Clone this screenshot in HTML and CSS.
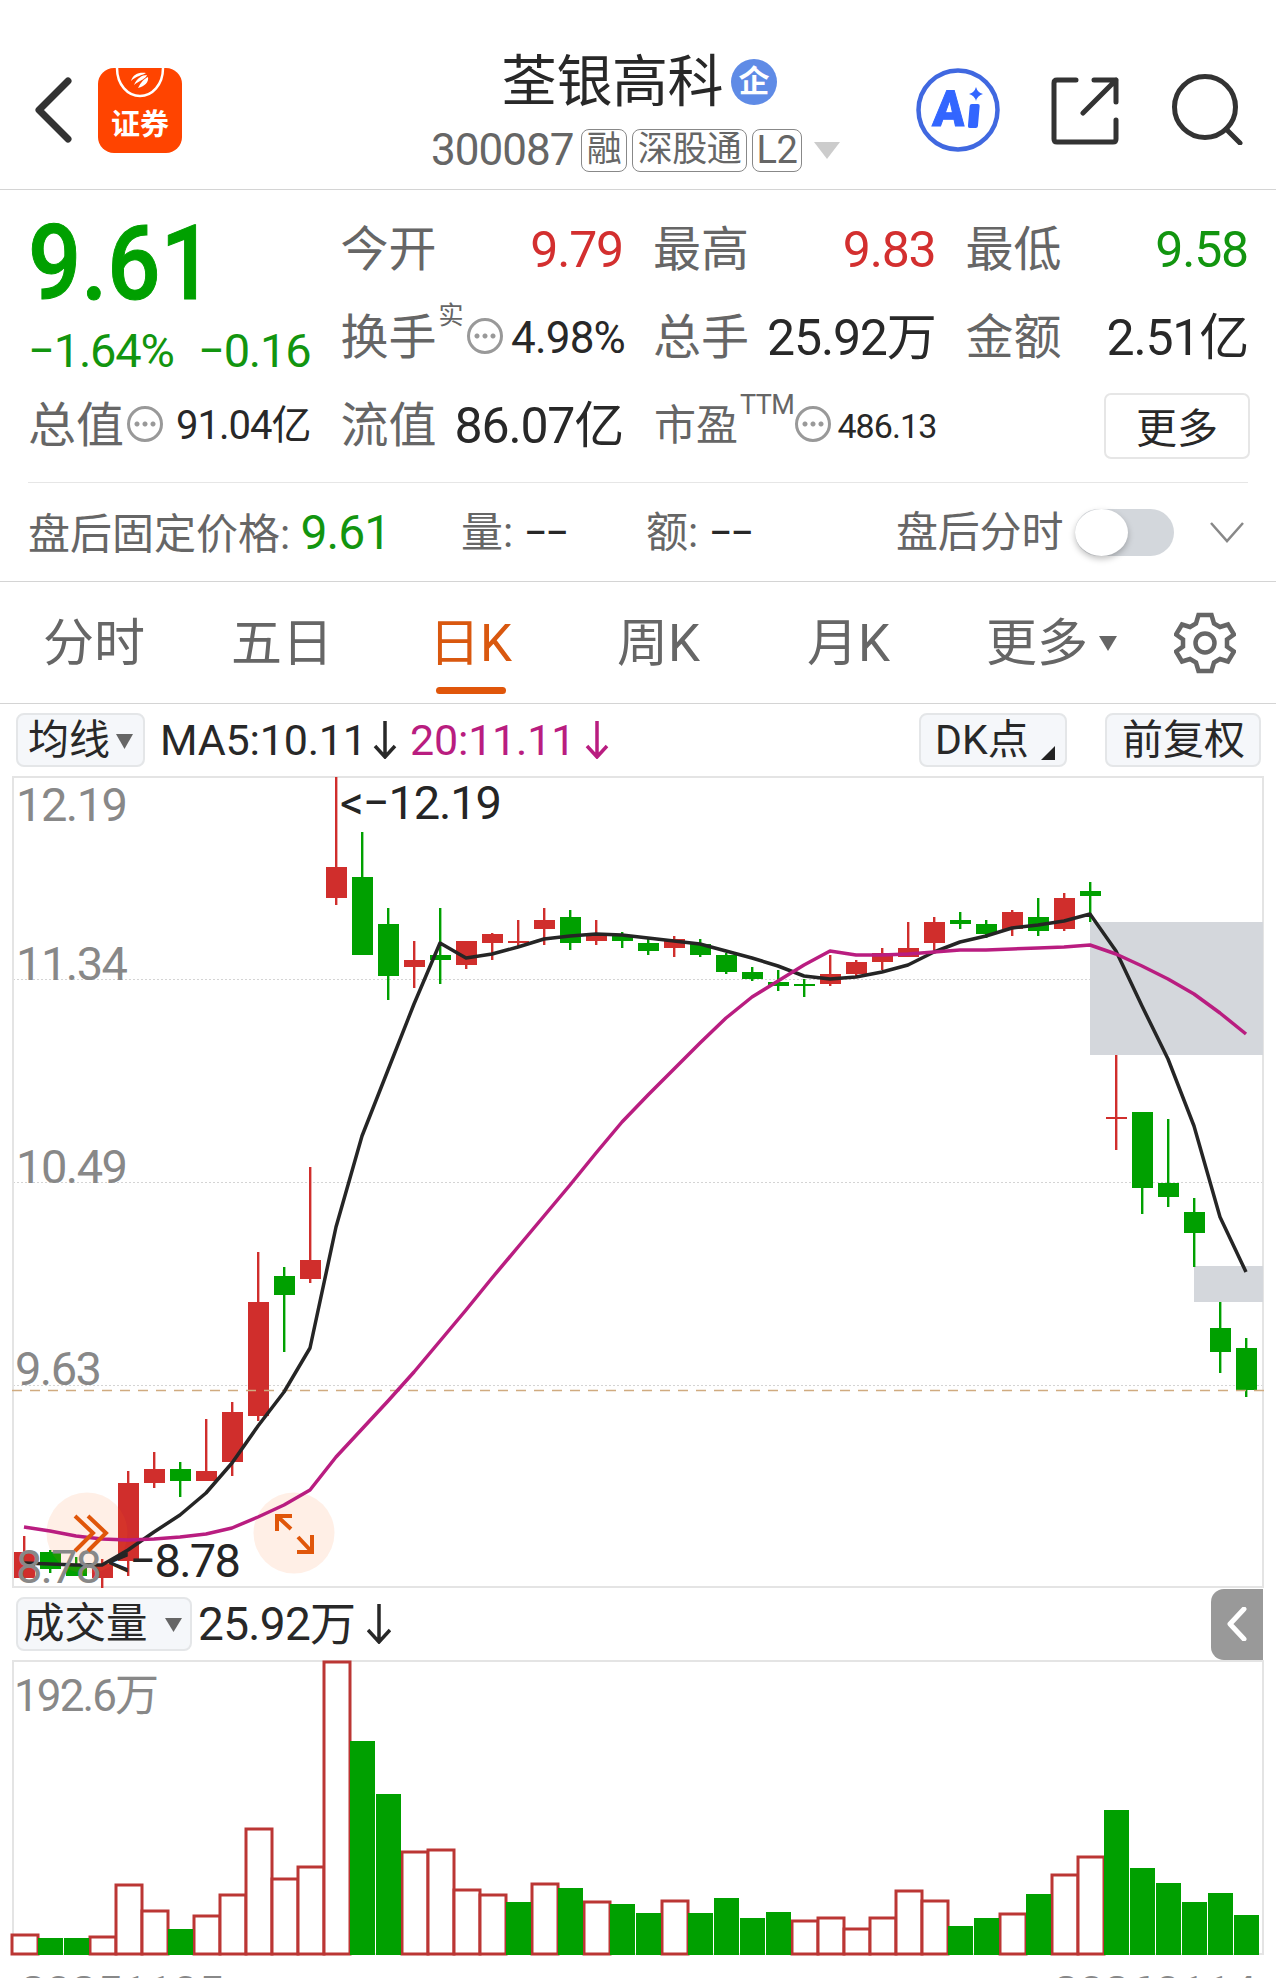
FILE: index.html
```html
<!DOCTYPE html>
<html lang="zh-CN">
<head>
  <meta charset="UTF-8" />
  <meta name="viewport" content="width=device-width, initial-scale=1.0" />
  <title>荃银高科 300087</title>
  <link rel="stylesheet" href="styles.css">
</head>
<body>

  <header class="header">
    <div class="header-left">
      <svg class="back" width="38" height="66" viewBox="0 0 38 66"><path d="M34 4 L5 33 L34 62" /></svg>
      <div class="app-logo">
        <svg width="84" height="30" viewBox="0 0 84 30">
          <path class="logo-ring" d="M19 0 C19 17 30 28 42 28 C54 28 65 17 65 0" />
          <path class="logo-mark" d="M33 13 C35 6 41 4 48 5 C45 7 38 8 33 13 Z M36 17 C39 10 44 7 49 7 C48 11 42 12 36 17 Z M40 20 C43 14 46 11 50 9 C51 14 47 18 40 20 Z" />
        </svg>
        <span>证券</span>
      </div>
    </div>
    <div class="header-title">
      <div class="name-row"><span class="name">荃银高科</span><span class="badge">企</span></div>
      <div class="code-row">
        <span class="code">300087</span>
        <span class="tag tag-1">融</span>
        <span class="tag tag-3">深股通</span>
        <span class="tag tag-2">L2</span>
        <svg class="drop" width="26" height="17" viewBox="0 0 26 17"><path d="M0 0 H26 L13 17 Z" fill="#ccc" /></svg>
      </div>
    </div>
    <div class="header-right">
      <div class="ai">
        <svg width="84" height="84" viewBox="0 0 84 84">
          <circle cx="42" cy="42" r="39.5" />
          <text x="20" y="58" textLength="32" lengthAdjust="spacingAndGlyphs" transform="skewX(-4)">A</text>
          <rect x="53" y="36" width="10" height="24" rx="2" transform="skewX(-5) translate(4 0)" />
          <path d="M60 19 Q61.500 24.500 67 26 Q61.500 27.500 60 33 Q58.500 27.500 53 26 Q58.500 24.500 60 19 Z" />
        </svg>
      </div>
      <svg class="line-icon" width="68" height="68" viewBox="0 0 68 68"><path d="M25 3 H6 Q3 3 3 6 V62 Q3 65 6 65 H62 Q65 65 65 62 V43 M43 3 H65 V25 M65 3 L32 36" /></svg>
      <svg class="line-icon search" width="72" height="72" viewBox="0 0 72 72"><circle cx="34" cy="34" r="30.500" /><path d="M55 56 L69 70" /></svg>
    </div>
  </header>

  <section class="quote">
    <div class="col col-main">
      <div class="price">9.61</div>
      <div class="change"><span>−1.64%</span><span>−0.16</span></div>
      <div class="cell">
        <span class="label">总值</span><i class="more-dot"></i><span class="value v-40">91.04亿</span>
      </div>
    </div>
    <div class="col">
      <div class="cell"><span class="label">今开</span><span class="value up">9.79</span></div>
      <div class="cell"><span class="label">换手</span><sup class="sup-cn">实</sup><i class="more-dot"></i><span class="value v-43">4.98%</span></div>
      <div class="cell"><span class="label">流值</span><span class="value">86.07亿</span></div>
    </div>
    <div class="col">
      <div class="cell"><span class="label">最高</span><span class="value up">9.83</span></div>
      <div class="cell"><span class="label">总手</span><span class="value">25.92万</span></div>
      <div class="cell"><span class="label label-sm">市盈</span><sup class="sup-en">TTM</sup><i class="more-dot dot-near"></i><span class="value v-34">486.13</span></div>
    </div>
    <div class="col">
      <div class="cell"><span class="label">最低</span><span class="value down">9.58</span></div>
      <div class="cell"><span class="label">金额</span><span class="value">2.51亿</span></div>
      <div class="cell"><button class="more-btn">更多</button></div>
    </div>
  </section>

  <section class="after">
    <span class="after-price">盘后固定价格: <b>9.61</b></span>
    <span class="after-vol">量: <em>−−</em></span>
    <span class="after-amt">额: <em>−−</em></span>
    <span class="after-switch">盘后分时</span>
    <span class="toggle"><i></i></span>
    <svg class="expand" width="36" height="22" viewBox="0 0 36 22"><path d="M2 1 L18 19 L34 1" /></svg>
  </section>

  <nav class="tabs">
    <a class="tab">分时</a>
    <a class="tab">五日</a>
    <a class="tab active">日K</a>
    <a class="tab">周K</a>
    <a class="tab">月K</a>
    <a class="tab tab-more">更多<svg width="18" height="15" viewBox="0 0 18 15"><path d="M0 0 H18 L9 15 Z" fill="#666" /></svg></a>
    <svg class="gear" width="62" height="62" viewBox="-31 -31 62 62">
      <path d="M-6.500 -28 H6.500 L9 -19.500 L15 -16 L23 -18.500 L29 -8.500 L22 -3.500 V3.500 L29 8.500 L23 18.500 L15 16 L9 19.500 L6.500 28 H-6.500 L-9 19.500 L-15 16 L-23 18.500 L-29 8.500 L-22 3.500 V-3.500 L-29 -8.500 L-23 -18.500 L-15 -16 L-9 -19.500 Z" />
      <circle r="9.500" />
    </svg>
  </nav>

  <div class="bar bar-ma">
    <span class="chip chip-ma">均线<svg width="17" height="15" viewBox="0 0 17 15"><path d="M0 0 H17 L8.500 15 Z" fill="#666" /></svg></span>
    <span class="ma5">MA5:10.11</span>
    <svg class="arrow" width="24" height="38" viewBox="0 0 24 38"><path d="M12 0 V35 M2 25 L12 36 L22 25" /></svg>
    <span class="ma20">20:11.11</span>
    <svg class="arrow arrow-ma20" width="24" height="38" viewBox="0 0 24 38"><path d="M12 0 V35 M2 25 L12 36 L22 25" /></svg>
    <span class="chip chip-dk">DK点<svg width="14" height="14" viewBox="0 0 14 14"><path d="M14 0 V14 H0 Z" fill="#222" /></svg></span>
    <span class="chip chip-fq">前复权</span>
  </div>

  <svg id="kline" class="kline" width="1276" height="812" viewBox="0 776 1276 812"></svg>

  <div class="bar bar-vol">
    <span class="chip chip-vol">成交量<svg width="17" height="14" viewBox="0 0 17 14"><path d="M0 0 H17 L8.500 14 Z" fill="#666" /></svg></span>
    <span class="vol">25.92万</span>
    <svg class="arrow" width="24" height="40" viewBox="0 0 24 40"><path d="M12 0 V37 M1 26 L12 38 L23 26" /></svg>
    <span class="side-tab"><svg width="20" height="34" viewBox="0 0 20 34"><path d="M17 2 L3 17 L17 32" /></svg></span>
  </div>

  <svg id="volume" class="volume" width="1276" height="318" viewBox="0 1660 1276 318"></svg>

  <script src="chart.js"></script>
</body>
</html>
```

FILE: styles.css
```css
* {
  box-sizing: border-box;
}

body {
  margin: 0;
  width: 1276px;
  height: 1978px;
  overflow: hidden;
  background: #fff;
  color: #282828;
  font-family: Roboto, "Noto Sans CJK SC", sans-serif;
  line-height: 1;
}

svg {
  display: block;
  flex: none;
}

span, a, sup, i, b, em {
  white-space: nowrap;
  font-style: normal;
}

/* header */
.header {
  display: flex;
  height: 190px;
  border-bottom: 1px solid #d4d4d4;
}

.header-left {
  display: flex;
  align-items: flex-start;
  width: 431px;
  padding: 68px 0 0 34px;
}

.back {
  margin-top: 9px;
}

.back path {
  fill: none;
  stroke: #333;
  stroke-width: 7;
  stroke-linecap: round;
  stroke-linejoin: round;
}

.app-logo {
  width: 84px;
  height: 85px;
  margin-left: 26px;
  border-radius: 16px;
  background: #ff4400;
  color: #fff;
  text-align: center;
  overflow: hidden;
}

.app-logo span {
  display: block;
  margin-top: 9px;
  font-family: "Noto Sans CJK SC", sans-serif;
  font-size: 29px;
  line-height: 30px;
  font-weight: 700;
}

.logo-ring {
  fill: none;
  stroke: #fff;
  stroke-width: 2.5;
}

.logo-mark {
  fill: #fff;
}

.header-title {
  width: 420px;
  padding-top: 51px;
}

.name-row {
  display: flex;
  align-items: center;
  height: 62px;
  padding-left: 70px;
}

.name {
  font-size: 56px;
  letter-spacing: -0.5px;
}

.badge {
  width: 46px;
  height: 46px;
  margin-left: 8px;
  border-radius: 50%;
  background: #5f8be6;
  color: #fff;
  font-size: 31px;
  font-weight: 700;
  line-height: 45px;
  text-align: center;
}

.code-row {
  display: flex;
  align-items: center;
  height: 44px;
  margin-top: 15px;
  color: #666;
}

.code {
  width: 150px;
  font-size: 44px;
  letter-spacing: -1px;
}

.tag {
  height: 43px;
  margin-right: 5px;
  border: 1.5px solid #888;
  border-radius: 8px;
  font-size: 35px;
  line-height: 40px;
  letter-spacing: -0.5px;
  text-align: center;
}

.tag-1 { width: 46px; }
.tag-2 { width: 50px; font-size: 38px; }
.tag-3 { width: 115px; }

.drop {
  margin-left: 7px;
}

.header-right {
  display: flex;
  align-items: flex-start;
  padding-top: 68px;
  margin-left: 65px;
}

.ai circle {
  fill: none;
  stroke: #4068e0;
  stroke-width: 4.5;
}

.ai {
  fill: #3366ff;
}

.ai text {
  font-size: 50px;
  font-weight: 900;
  stroke: #3366ff;
  stroke-width: 1;
}

.line-icon {
  margin: 9px 0 0 51px;
  fill: none;
  stroke: #333;
  stroke-width: 5;
  stroke-linecap: round;
  stroke-linejoin: round;
}

.search {
  margin: 5px 0 0 52px;
}

/* quote */
.quote {
  display: flex;
  gap: 30px;
  height: 292px;
  padding: 16px 27px 0 28px;
}

.col {
  width: 282.5px;
  flex: none;
}

.cell {
  display: flex;
  align-items: center;
  height: 88px;
}

.label {
  color: #666;
  font-size: 48px;
}

.label-sm {
  font-size: 42px;
  padding-left: 1px;
}

.value {
  margin-left: auto;
  font-size: 50px;
  letter-spacing: -1.2px;
}

.v-43 { font-size: 44px; letter-spacing: -0.8px; margin-right: -2px; }
.v-40 { font-size: 40px; letter-spacing: -1px; }
.v-34 { font-size: 34px; letter-spacing: -0.9px; margin-right: -1px; }

.up { color: #d32f2f; }
.down { color: #12950f; }

.price {
  height: 112px;
  color: #00a000;
  font-size: 104px;
  font-weight: 500;
  line-height: 116px;
  transform: scaleX(0.9);
  transform-origin: 0 0;
  -webkit-text-stroke: 1px #00a000;
}

.change {
  display: flex;
  justify-content: space-between;
  height: 64px;
  color: #12950f;
  font-size: 47px;
  line-height: 66px;
  letter-spacing: -1.2px;
}

.more-dot {
  flex: none;
  width: 36px;
  height: 36px;
  margin: -4px 0 0 3px;
  border: 3px solid #999;
  border-radius: 50%;
  background:
    radial-gradient(circle at 7px 15px, #999 2px, transparent 3px),
    radial-gradient(circle at 15px 15px, #999 2px, transparent 3px),
    radial-gradient(circle at 23px 15px, #999 2px, transparent 3px);
}

.dot-near {
  margin-left: 1px;
}

.sup-cn {
  margin: -46px 0 0 2px;
  color: #666;
  font-size: 25px;
}

.sup-en {
  margin: -42px 0 0 2px;
  color: #666;
  font-size: 27px;
  letter-spacing: -0.6px;
}

.more-btn {
  width: 146px;
  height: 66px;
  margin: 0 -2px 0 auto;
  padding: 0 0 8px;
  border: 2px solid #e6e6e6;
  border-radius: 7px;
  background: #fff;
  color: #282828;
  font-family: inherit;
  font-size: 41px;
}

/* after-hours row */
.after {
  display: flex;
  align-items: center;
  position: relative;
  height: 100px;
  padding: 2px 0 0 28px;
  border-bottom: 1px solid #d4d4d4;
  color: #666;
  font-size: 42px;
}

/* short rule that stays inside the side padding */
.after::before {
  content: "";
  position: absolute;
  top: 0;
  left: 28px;
  right: 28px;
  height: 1px;
  background: #e6e6e6;
}

.after b {
  color: #12950f;
  font-size: 48px;
  font-weight: 400;
  letter-spacing: -1px;
}

.after em {
  color: #282828;
  letter-spacing: -2.5px;
}

.after-price { width: 433px; }
.after-vol { width: 185px; }
.after-amt { width: 250px; }
.after-switch { width: 179px; letter-spacing: -0.2px; }

.toggle {
  width: 99px;
  height: 47px;
  border-radius: 24px;
  background: #d3d7dc;
}

.toggle i {
  display: block;
  width: 53px;
  height: 47px;
  border-radius: 50%;
  background: #fff;
  box-shadow: 0 3px 6px rgba(0, 0, 0, 0.25);
}

.expand {
  margin-left: 35px;
  fill: none;
  stroke: #888;
  stroke-width: 2.5;
}

/* tabs */
.tabs {
  display: flex;
  height: 122px;
  padding-left: 43px;
  border-bottom: 1px solid #d4d4d4;
}

.tab {
  width: 188px;
  height: 112px;
  color: #666;
  font-size: 51px;
  line-height: 123px;
}

.tab:nth-child(2) { width: 198px; }
.tab:nth-child(3) { width: 188px; }
.tab:nth-child(4) { width: 190px; }
.tab:nth-child(5) { width: 179px; }

.active {
  color: #d9580f;
}

.active::after {
  content: "";
  display: block;
  width: 70px;
  height: 7px;
  margin: -18px 0 0 7px;
  border-radius: 4px;
  background: #e0560a;
}

.tab-more {
  display: flex;
  align-items: flex-start;
}

.tab-more svg {
  margin: 54px 0 0 11px;
}

.gear {
  margin-top: 30px;
  fill: none;
  stroke: #666;
  stroke-width: 4.5;
}

/* indicator bars */
.bar {
  display: flex;
  align-items: center;
  font-size: 43px;
}

.bar-ma {
  height: 72px;
  padding: 0 15px 0 16px;
}

.chip {
  display: flex;
  align-items: center;
  height: 54px;
  border: 2px solid #e4e6e8;
  border-radius: 8px;
  background: #f5f7fa;
  font-size: 41px;
}

.chip-ma { width: 129px; padding-left: 10px; }
.chip-ma svg { margin: 3px 0 0 6px; }
.chip-dk { width: 148px; padding-left: 14px; margin-left: auto; }
.chip-dk svg { margin: 26px 0 0 12px; }
.chip-fq { width: 156px; padding-left: 15px; margin-left: 38px; }
.chip-vol { width: 176px; padding-left: 5px; font-size: 41.500px; }
.chip-vol svg { margin: 2px 0 0 17px; }

.ma5 { width: 213px; margin-left: 15px; letter-spacing: -0.2px; }
.ma20 { width: 175px; margin-left: 13px; color: #b91d80; letter-spacing: -0.2px; }

.arrow {
  fill: none;
  stroke: #282828;
  stroke-width: 3.5;
}

.arrow-ma20 {
  stroke: #b91d80;
}

.bar-vol {
  height: 72px;
  padding: 0 13px 0 16px;
}

.vol {
  width: 169px;
  margin-left: 6px;
  font-size: 46px;
  letter-spacing: -0.7px;
}

.side-tab {
  display: flex;
  align-items: center;
  justify-content: center;
  width: 52px;
  height: 71px;
  margin-left: auto;
  border-radius: 13px 0 0 13px;
  background: #999;
}

.side-tab path {
  fill: none;
  stroke: #fff;
  stroke-width: 5;
  stroke-linecap: round;
  stroke-linejoin: round;
}

/* charts */
.frame { fill: none; stroke: #e4e4e4; stroke-width: 2; }
.grid { stroke: #d4d4d4; stroke-width: 1.2; stroke-dasharray: 2 2; }
.last { stroke: #d0ab80; stroke-width: 1.3; stroke-dasharray: 10 8; }
.gap { fill: #d4d7dc; }
.red { fill: #d02e2c; }
.green { fill: #00a000; }
.hollow { fill: #fff; stroke: #bb3634; stroke-width: 3; }
.line5 { fill: none; stroke: #252525; stroke-width: 3.5; stroke-linejoin: round; }
.line20 { fill: none; stroke: #b91d80; stroke-width: 3.5; stroke-linejoin: round; }
.axis { fill: #888; font-size: 47px; }
.axis-vol { fill: #888; font-size: 44px; }
.mark { fill: #252525; font-size: 47px; }
.round { fill: #ff6a1a; fill-opacity: 0.11; }
.round-icon { fill: none; stroke: #e0560a; stroke-width: 4; }
```

FILE: chart.js
```js
// [high, body top, body bottom, low, color, volume top, volume color]
const days = [
  [1536, 1552, 1578, 1580, 'r', 1934, 'r'],
  [1550, 1552, 1569, 1573, 'g', 1938, 'g'],
  [1557, 1564, 1576, 1576, 'g', 1938, 'g'],
  [1559, 1564, 1578, 1588, 'r', 1936, 'r'],
  [1471, 1483, 1561, 1576, 'r', 1884, 'r'],
  [1452, 1469, 1483, 1488, 'r', 1910, 'r'],
  [1462, 1469, 1481, 1497, 'g', 1929, 'g'],
  [1419, 1471, 1481, 1481, 'r', 1915, 'r'],
  [1402, 1412, 1462, 1476, 'r', 1894, 'r'],
  [1252, 1302, 1416, 1421, 'r', 1828, 'r'],
  [1267, 1276, 1295, 1352, 'g', 1878, 'r'],
  [1167, 1260, 1279, 1283, 'r', 1866, 'r'],
  [777, 867, 898, 905, 'r', 1661, 'r'],
  [832, 877, 955, 955, 'g', 1741, 'g'],
  [908, 924, 976, 1000, 'g', 1794, 'g'],
  [941, 960, 967, 988, 'r', 1851, 'r'],
  [908, 955, 960, 984, 'g', 1849, 'r'],
  [941, 941, 965, 969, 'r', 1889, 'r'],
  [933, 934, 943, 960, 'r', 1894, 'r'],
  [920, 941, 943, 946, 'r', 1902, 'g'],
  [908, 920, 929, 945, 'r', 1883, 'r'],
  [910, 917, 943, 950, 'g', 1888, 'g'],
  [920, 934, 941, 945, 'r', 1901, 'r'],
  [932, 935, 941, 948, 'g', 1904, 'g'],
  [938, 943, 951, 955, 'g', 1913, 'g'],
  [936, 939, 948, 957, 'r', 1900, 'r'],
  [939, 944, 955, 957, 'g', 1913, 'g'],
  [953, 955, 972, 974, 'g', 1898, 'g'],
  [967, 972, 979, 981, 'g', 1918, 'g'],
  [970, 982, 986, 991, 'g', 1912, 'g'],
  [979, 984, 986, 997, 'g', 1920, 'r'],
  [955, 974, 984, 986, 'r', 1917, 'r'],
  [960, 962, 974, 977, 'r', 1928, 'r'],
  [948, 953, 962, 970, 'r', 1917, 'r'],
  [922, 948, 957, 957, 'r', 1890, 'r'],
  [917, 922, 943, 950, 'r', 1900, 'r'],
  [912, 920, 924, 929, 'g', 1926, 'g'],
  [920, 924, 934, 938, 'g', 1918, 'g'],
  [910, 912, 929, 936, 'r', 1913, 'r'],
  [898, 917, 931, 936, 'g', 1894, 'g'],
  [893, 898, 929, 931, 'r', 1874, 'r'],
  [882, 891, 896, 922, 'g', 1856, 'r'],
  [1055, 1117, 1119, 1150, 'r', 1810, 'g'],
  [1112, 1112, 1188, 1214, 'g', 1868, 'g'],
  [1119, 1183, 1197, 1207, 'g', 1883, 'g'],
  [1198, 1212, 1233, 1267, 'g', 1902, 'g'],
  [1302, 1328, 1352, 1373, 'g', 1893, 'g'],
  [1338, 1348, 1390, 1397, 'g', 1915, 'g'],
];

const ma5 = [1563, 1564, 1565, 1565, 1550, 1532, 1515, 1493, 1463, 1426, 1392, 1348,
  1227, 1136, 1070, 1004, 943, 958, 954, 947, 939, 936, 934, 935, 938, 941, 944, 951,
  958, 966, 976, 979, 977, 972, 965, 952, 942, 936, 928, 925, 921, 914, 951, 1006,
  1059, 1126, 1217, 1272];

const ma20 = [1527, 1531, 1536, 1539, 1540, 1539, 1537, 1534, 1528, 1517, 1505, 1490,
  1457, 1429, 1401, 1372, 1341, 1310, 1278, 1247, 1216, 1185, 1153, 1122, 1095, 1069,
  1043, 1018, 997, 981, 965, 951, 955, 955, 954, 952, 950, 950, 949, 948, 947, 945,
  954, 966, 979, 994, 1013, 1034];

const STEP = 26;
const cx = i => 24 + i * STEP;
const cls = c => (c === 'r' ? 'red' : 'green');
const poly = (list, name) =>
  `<polyline class="${name}" points="${list.map((y, i) => cx(i) + ',' + y).join(' ')}" />`;
const text = (name, x, y, len, s) =>
  `<text class="${name}" x="${x}" y="${y}" textLength="${len}">${s}</text>`;

// candles
let k = '';
k += [979, 1182, 1385].map(y => `<line class="grid" x1="13" x2="1263" y1="${y}.5" y2="${y}.5" />`).join('');
k += '<rect class="frame" x="13" y="777" width="1250" height="810" />';
k += '<rect class="gap" x="1090" y="922" width="173" height="133" />';
k += '<rect class="gap" x="1194" y="1266" width="69" height="36" />';
days.forEach(([hi, top, bot, lo, c], i) => {
  k += `<rect class="${cls(c)}" x="${cx(i) - 1}" y="${hi}" width="2.4" height="${lo - hi}" />`;
  k += `<rect class="${cls(c)}" x="${cx(i) - 10}" y="${top}" width="21" height="${bot - top}" />`;
});
k += '<line class="last" x1="12" x2="1264" y1="1390.500" y2="1390.500" />';
k += '<circle class="round" cx="87" cy="1533" r="40.500" /><circle class="round" cx="294" cy="1533" r="40.500" />';
k += poly(ma5, 'line5') + poly(ma20, 'line20');
k += text('axis', 16, 821, 112, '12.19');
k += text('axis', 16, 980, 112, '11.34');
k += text('axis', 16, 1183, 112, '10.49');
k += text('axis', 15, 1385, 87, '9.63');
k += text('axis', 16, 1583, 86, '8.78');
k += text('mark', 340, 819, 162, '&lt;−12.19');
k += text('mark', 107, 1577, 134, '&lt;−8.78');
k += '<path class="round-icon" d="M75 1516 L93 1533 L75 1551 M88 1516 L106 1533 L88 1551" />';
k += '<path class="round-icon" d="M292 1516 H277 V1531 M277 1516 L291 1529 M297 1552 H312 V1535 M312 1552 L298 1537" />';
document.getElementById('kline').innerHTML = k;

// volume
const BASE = 1954;
let v = '<rect class="frame" x="13" y="1661" width="1250" height="293" />';
days.forEach(([, , , , , y, c], i) => {
  if (c === 'r') {
    v += `<rect class="hollow" x="${cx(i) - 12}" y="${y + 1}" width="26" height="${BASE - y - 1}" />`;
  }
});
days.forEach(([, , , , , y, c], i) => {
  if (c === 'g') {
    v += `<rect class="green" x="${cx(i) - 12}" y="${y}" width="25" height="${BASE - y + 1}" />`;
  }
});
v += text('axis-vol', 14, 1711, 145, '192.6万');
v += text('axis', 20, 2009, 204, '20251105');
v += text('axis', 1053, 2009, 204, '20260114');
document.getElementById('volume').innerHTML = v;
```
